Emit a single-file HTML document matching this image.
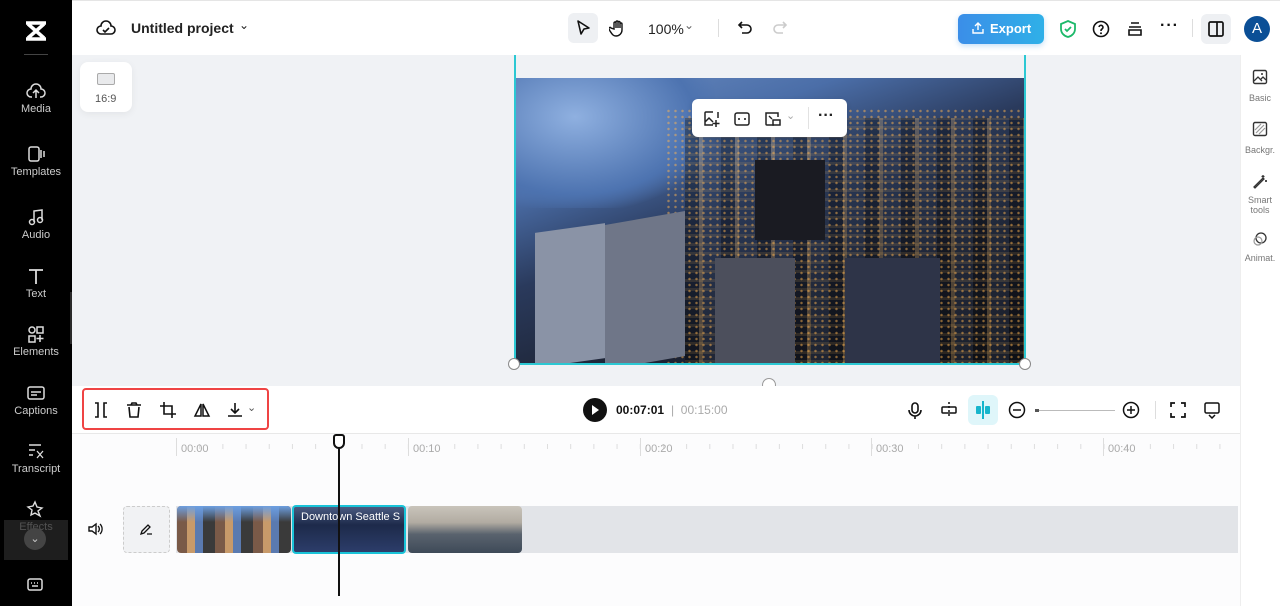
<!DOCTYPE html>
<html><head><style>
*{box-sizing:border-box;margin:0;padding:0}
body{width:1280px;height:606px;overflow:hidden;font-family:"Liberation Sans",sans-serif;background:#fff;position:relative}
.abs{position:absolute}
.side{left:0;top:0;width:72px;height:606px;background:#000;color:#ddd}
.si{position:absolute;left:0;width:72px;text-align:center;font-size:11px;color:#ccc}
.si svg{display:block;margin:0 auto 3px}
.tl{font-size:11px;color:#aaa}
</style></head><body>
<div class="abs side">
 <svg class="abs" style="left:24px;top:20px" width="24" height="22" viewBox="0 0 24 22"><path d="M2 3h20M2 19h20M4 4l16 14M20 4L4 18" stroke="#fff" stroke-width="3.5" fill="none"/></svg>
 <div class="abs" style="left:24px;top:54px;width:24px;height:1px;background:#444"></div>
 <div class="si" style="top:82px"><svg width="20" height="18" viewBox="0 0 20 18"><path d="M6 15H5a4 4 0 0 1 0-8 5 5 0 0 1 10 0 4 4 0 0 1 0 8h-1M10 16V9M7 11l3-3 3 3" stroke="#ddd" stroke-width="1.5" fill="none"/></svg>Media</div>
 <div class="si" style="top:145px"><svg width="20" height="18" viewBox="0 0 20 18"><rect x="3" y="2" width="10" height="14" rx="2" stroke="#ddd" stroke-width="1.5" fill="none"/><path d="M15 5v8M18 6v6" stroke="#ddd" stroke-width="1.5"/></svg>Templates</div>
 <div class="si" style="top:208px"><svg width="20" height="18" viewBox="0 0 20 18"><path d="M8 14V3l8-1v10" stroke="#ddd" stroke-width="1.5" fill="none"/><circle cx="6" cy="14" r="2.5" stroke="#ddd" stroke-width="1.5" fill="none"/><circle cx="14" cy="12" r="2.5" stroke="#ddd" stroke-width="1.5" fill="none"/></svg>Audio</div>
 <div class="si" style="top:267px"><svg width="20" height="18" viewBox="0 0 20 18"><path d="M3 3h14M10 3v14" stroke="#ddd" stroke-width="1.8"/></svg>Text</div>
 <div class="si" style="top:325px"><svg width="20" height="18" viewBox="0 0 20 18"><circle cx="6" cy="5" r="3" stroke="#ddd" stroke-width="1.5" fill="none"/><rect x="11" y="2" width="6" height="6" stroke="#ddd" stroke-width="1.5" fill="none"/><rect x="3" y="11" width="6" height="6" stroke="#ddd" stroke-width="1.5" fill="none"/><path d="M14 10v7M10.5 13.5h7" stroke="#ddd" stroke-width="1.5"/></svg>Elements</div>
 <div class="si" style="top:384px"><svg width="20" height="18" viewBox="0 0 20 18"><rect x="2" y="3" width="16" height="12" rx="2" stroke="#ddd" stroke-width="1.5" fill="none"/><path d="M5 8h10M5 11h6" stroke="#ddd" stroke-width="1.5"/></svg>Captions</div>
 <div class="si" style="top:442px"><svg width="20" height="18" viewBox="0 0 20 18"><path d="M3 3h12M3 8h6M3 13h4" stroke="#ddd" stroke-width="1.5"/><path d="M11 9l6 7M17 9l-6 7" stroke="#ddd" stroke-width="1.3"/></svg>Transcript</div>
 <div class="si" style="top:500px"><svg width="20" height="18" viewBox="0 0 20 18"><path d="M9 2l2 5 5 1-4 3 2 5-5-3-4 2 1-5-4-3 5-1z" stroke="#ddd" stroke-width="1.4" fill="none"/></svg>Effects</div>
 <div class="abs" style="left:4px;top:520px;width:64px;height:40px;background:rgba(40,40,40,.75)"></div>
 <div class="abs" style="left:24px;top:528px;width:22px;height:22px;border-radius:50%;background:#444;color:#ccc;font-size:11px;text-align:center;line-height:22px">⌄</div>
 <svg class="abs" style="left:26px;top:577px" width="18" height="16" viewBox="0 0 18 16"><rect x="2" y="2" width="14" height="11" rx="2" stroke="#ddd" stroke-width="1.5" fill="none"/><path d="M5 6h1M8 6h1M11 6h1M6 9h6" stroke="#ddd" stroke-width="1.5"/></svg>
</div>
<div class="abs" style="left:70px;top:292px;width:10px;height:52px;background:#2a2a2a;border-radius:0 6px 6px 0"></div>

<div class="abs" style="left:72px;top:0;width:1208px;height:55px;background:#fff;border-top:1px solid #e5e5e5">
 <svg class="abs" style="left:24px;top:18px" width="20" height="18" viewBox="0 0 20 18"><path d="M5 15a4 4 0 0 1 0-8 5 5 0 0 1 10 0 4 4 0 0 1 0 8z" stroke="#111" stroke-width="1.6" fill="none"/><path d="M7 11l2 2 4-4" stroke="#111" stroke-width="1.6" fill="none"/></svg>
 <div class="abs" style="left:59px;top:19px;font-size:14px;font-weight:bold;color:#222">Untitled project</div>
 <div class="abs" style="left:167px;top:17px;font-size:12px;color:#222">⌄</div>
 <div class="abs" style="left:496px;top:12px;width:30px;height:30px;border-radius:6px;background:#eef0f3"></div>
 <svg class="abs" style="left:503px;top:18px" width="16" height="18" viewBox="0 0 16 18"><path d="M3 2l11 7-5 1-3 5z" stroke="#111" stroke-width="1.6" fill="none" stroke-linejoin="round"/></svg>
 <svg class="abs" style="left:537px;top:18px" width="18" height="18" viewBox="0 0 18 18"><path d="M5 10V4a1 1 0 0 1 2 0v5V3a1 1 0 0 1 2 0v6V3.5a1 1 0 0 1 2 0V9V5a1 1 0 0 1 2 0v6a6 6 0 0 1-6 6c-3 0-4-2-6-5l-1-2a1 1 0 0 1 2-1z" stroke="#111" stroke-width="1.4" fill="none"/></svg>
 <div class="abs" style="left:576px;top:20px;font-size:14px;color:#222">100%</div>
 <div class="abs" style="left:612px;top:17px;font-size:12px;color:#666">⌄</div>
 <div class="abs" style="left:646px;top:18px;width:1px;height:18px;background:#ddd"></div>
 <svg class="abs" style="left:664px;top:18px" width="18" height="18" viewBox="0 0 18 18"><path d="M6 3L3 6l3 3M3 6h8a4 4 0 0 1 0 8H6" stroke="#111" stroke-width="1.6" fill="none"/></svg>
 <svg class="abs" style="left:699px;top:18px" width="18" height="18" viewBox="0 0 18 18"><path d="M12 3l3 3-3 3M15 6H7a4 4 0 0 0 0 8h5" stroke="#ccc" stroke-width="1.6" fill="none"/></svg>
 <div class="abs" style="left:886px;top:13px;width:86px;height:30px;border-radius:6px;background:linear-gradient(90deg,#3b8ee8,#2fb0e8);color:#fff;font-size:13px;font-weight:bold;line-height:30px;padding-left:32px;box-shadow:0 2px 6px rgba(60,150,230,.3)">Export</div>
 <svg class="abs" style="left:899px;top:20px" width="14" height="14" viewBox="0 0 14 14"><path d="M7 9V2M4 5l3-3 3 3M2 8v4h10V8" stroke="#fff" stroke-width="1.4" fill="none"/></svg>
 <svg class="abs" style="left:987px;top:18px" width="18" height="20" viewBox="0 0 18 20"><path d="M9 2l7 3v5c0 4-3 7-7 8-4-1-7-4-7-8V5z" stroke="#1db96a" stroke-width="1.8" fill="none"/><path d="M6 10l2 2 4-4" stroke="#1db96a" stroke-width="1.8" fill="none"/></svg>
 <svg class="abs" style="left:1020px;top:19px" width="18" height="18" viewBox="0 0 18 18"><circle cx="9" cy="9" r="7.5" stroke="#111" stroke-width="1.6" fill="none"/><path d="M7 7a2 2 0 1 1 3 2c-1 .5-1 1-1 2" stroke="#111" stroke-width="1.6" fill="none"/><circle cx="9" cy="13.3" r="1" fill="#111"/></svg>
 <svg class="abs" style="left:1054px;top:19px" width="18" height="18" viewBox="0 0 18 18"><path d="M5 3h8M3 7h12M3 10h12v5H3z" stroke="#111" stroke-width="1.6" fill="none"/></svg>
 <div class="abs" style="left:1088px;top:16px;font-size:16px;font-weight:bold;color:#111;letter-spacing:1px">···</div>
 <div class="abs" style="left:1120px;top:18px;width:1px;height:18px;background:#ddd"></div>
 <div class="abs" style="left:1129px;top:13px;width:30px;height:30px;border-radius:6px;background:#eef0f3"></div>
 <svg class="abs" style="left:1135px;top:19px" width="18" height="18" viewBox="0 0 18 18"><rect x="2" y="2" width="14" height="14" rx="1.5" stroke="#111" stroke-width="1.7" fill="none"/><path d="M10 2v14" stroke="#111" stroke-width="1.7"/></svg>
 <div class="abs" style="left:1172px;top:15px;width:26px;height:26px;border-radius:50%;background:#0b4f96;color:#fff;font-size:15px;text-align:center;line-height:26px">A</div>
</div>

<div class="abs" style="left:72px;top:55px;width:1168px;height:331px;background:#f0f2f5"></div>
<div class="abs" style="left:80px;top:62px;width:52px;height:50px;background:#fff;border-radius:8px;box-shadow:0 2px 8px rgba(0,0,0,.06)"></div>
<div class="abs" style="left:97px;top:73px;width:18px;height:12px;border:1.5px solid #aaa;border-radius:2px;background:#e9eaec"></div>
<div class="abs" style="left:95px;top:93px;font-size:11px;color:#555">16:9</div>

<div class="abs" style="left:515px;top:78px;width:510px;height:285px;overflow:hidden;background:linear-gradient(160deg,#6d8fc4 0%,#4b6ea8 25%,#2a3a5c 45%,#1d2333 70%,#15171f 100%)">
 <div class="abs" style="left:0;top:0;width:200px;height:130px;background:radial-gradient(ellipse at 30% 30%,#8fb0e0,#4d73b0 60%,transparent 75%)"></div>
 <div class="abs" style="left:170px;top:40px;width:340px;height:245px;background:repeating-linear-gradient(90deg,rgba(0,0,0,.35) 0 14px,rgba(230,170,80,.25) 14px 18px,rgba(40,50,70,.3) 18px 36px)"></div>
 <div class="abs" style="left:170px;top:40px;width:340px;height:245px;background:repeating-linear-gradient(0deg,rgba(255,190,90,.12) 0 3px,transparent 3px 9px)"></div>
 <div class="abs" style="left:150px;top:30px;width:360px;height:255px;background:radial-gradient(circle,rgba(255,180,80,.5) 0 1px,transparent 1.5px);background-size:7px 6px"></div>
 <div class="abs" style="left:20px;top:150px;width:70px;height:135px;background:#8a93a6;transform:skewY(-8deg)"></div>
 <div class="abs" style="left:90px;top:140px;width:80px;height:145px;background:#6f7688;transform:skewY(-10deg)"></div>
 <div class="abs" style="left:240px;top:82px;width:70px;height:80px;background:#1a1b22"></div>
 <div class="abs" style="left:330px;top:180px;width:95px;height:105px;background:#2e3448"></div>
 <div class="abs" style="left:200px;top:180px;width:80px;height:105px;background:#4c4f5c"></div>
</div>
<div class="abs" style="left:514px;top:55px;width:2px;height:309px;background:#2cc8d3"></div>
<div class="abs" style="left:1024px;top:55px;width:2px;height:309px;background:#2cc8d3"></div>
<div class="abs" style="left:514px;top:363px;width:512px;height:2px;background:#2cc8d3"></div>
<div class="abs" style="left:508px;top:358px;width:12px;height:12px;border-radius:50%;background:#fff;border:1px solid #888"></div>
<div class="abs" style="left:1019px;top:358px;width:12px;height:12px;border-radius:50%;background:#fff;border:1px solid #888"></div>
<div class="abs" style="left:762px;top:378px;width:14px;height:14px;border-radius:50%;background:#fff;border:1px solid #999"></div>

<div class="abs" style="left:692px;top:99px;width:155px;height:38px;background:#fff;border-radius:6px;box-shadow:0 2px 6px rgba(0,0,0,.12)">
 <svg class="abs" style="left:11px;top:11px" width="18" height="18" viewBox="0 0 18 18"><path d="M10 2H3a1 1 0 0 0-1 1v12h8M2 12l4-4 4 4M13 10v7M9.5 13.5h7M15 2v6" stroke="#222" stroke-width="1.5" fill="none"/></svg>
 <svg class="abs" style="left:41px;top:11px" width="18" height="18" viewBox="0 0 18 18"><rect x="2" y="3" width="14" height="12" rx="2" stroke="#222" stroke-width="1.5" fill="none"/><path d="M6 8v2M12 8v2" stroke="#222" stroke-width="1.6"/></svg>
 <svg class="abs" style="left:72px;top:11px" width="18" height="18" viewBox="0 0 18 18"><path d="M10 15H3a1 1 0 0 1-1-1V3h12v4" stroke="#222" stroke-width="1.5" fill="none"/><rect x="9" y="10" width="7" height="5" stroke="#222" stroke-width="1.5" fill="none"/><path d="M5 6l3 3" stroke="#222" stroke-width="1.4"/></svg>
 <div class="abs" style="left:94px;top:10px;font-size:11px;color:#aaa">⌄</div>
 <div class="abs" style="left:116px;top:8px;width:1px;height:22px;background:#e2e2e2"></div>
 <div class="abs" style="left:126px;top:8px;font-size:16px;font-weight:bold;color:#222">···</div>
</div>

<div class="abs" style="left:1240px;top:55px;width:40px;height:551px;background:#fff;border-left:1px solid #eee"></div>
<div class="abs" style="left:1240px;top:69px;width:40px;text-align:center;font-size:9px;color:#777">
 <svg width="16" height="16" viewBox="0 0 16 16" style="display:block;margin:0 auto 8px"><rect x="1.5" y="1.5" width="13" height="13" rx="1.5" stroke="#333" stroke-width="1.4" fill="none"/><path d="M2 12l4-4 4 4M9 10l2-2 3 3" stroke="#333" stroke-width="1.3" fill="none"/><circle cx="10" cy="5" r="1" fill="#333"/></svg>Basic
 <svg width="16" height="16" viewBox="0 0 16 16" style="display:block;margin:18px auto 8px"><rect x="1.5" y="1.5" width="13" height="13" rx="1.5" stroke="#333" stroke-width="1.4" fill="none"/><path d="M4 12l8-8M7 13l6-6M3 9l6-6" stroke="#999" stroke-width="1.2"/></svg>Backgr.
 <svg width="16" height="16" viewBox="0 0 16 16" style="display:block;margin:18px auto 6px"><path d="M2 14l9-9 1 1-9 9zM11 2v3M9.5 3.5h3M14 7v2M13 8h2" stroke="#333" stroke-width="1.3" fill="none"/></svg>Smart<br>tools
 <svg width="16" height="16" viewBox="0 0 16 16" style="display:block;margin:16px auto 6px"><circle cx="9" cy="7" r="5" stroke="#333" stroke-width="1.3" fill="none"/><circle cx="6" cy="10" r="4" stroke="#999" stroke-width="1.2" fill="none"/></svg>Animat.
</div>

<div class="abs" style="left:72px;top:386px;width:1168px;height:48px;background:#fff;border-bottom:1px solid #e8e8e8"></div>
<div class="abs" style="left:82px;top:388px;width:187px;height:42px;border:2px solid #ef4444;border-radius:4px"></div>
<svg class="abs" style="left:92px;top:401px" width="18" height="18" viewBox="0 0 18 18"><path d="M3 2h3v14H3M15 2h-3v14h3" stroke="#111" stroke-width="1.6" fill="none"/></svg>
<svg class="abs" style="left:125px;top:401px" width="18" height="18" viewBox="0 0 18 18"><path d="M2 4h14M6 4l1-2h4l1 2M4 6l1 10h8l1-10" stroke="#111" stroke-width="1.6" fill="none"/></svg>
<svg class="abs" style="left:159px;top:401px" width="18" height="18" viewBox="0 0 18 18"><path d="M5 1v12h12M1 5h12v12" stroke="#111" stroke-width="1.6" fill="none"/></svg>
<svg class="abs" style="left:193px;top:401px" width="18" height="18" viewBox="0 0 18 18"><path d="M8 3L2 15h6zM10 3l6 12h-6z" stroke="#111" stroke-width="1.5" fill="none"/></svg>
<svg class="abs" style="left:226px;top:401px" width="18" height="18" viewBox="0 0 18 18"><path d="M9 2v10M5 8l4 4 4-4M2 15h14" stroke="#111" stroke-width="1.6" fill="none"/></svg>
<div class="abs" style="left:247px;top:401px;font-size:11px;color:#555">⌄</div>

<div class="abs" style="left:583px;top:398px;width:24px;height:24px;border-radius:50%;background:#111"></div>
<div class="abs" style="left:592px;top:405px;width:0;height:0;border-left:7px solid #fff;border-top:5px solid transparent;border-bottom:5px solid transparent"></div>
<div class="abs" style="left:616px;top:403px;font-size:12px;font-weight:bold;color:#111">00:07:01</div>
<div class="abs" style="left:671px;top:403px;font-size:12px;color:#aaa">|&nbsp; 00:15:00</div>

<svg class="abs" style="left:906px;top:401px" width="18" height="20" viewBox="0 0 18 20"><rect x="6" y="2" width="6" height="10" rx="3" stroke="#111" stroke-width="1.6" fill="none"/><path d="M3 9a6 6 0 0 0 12 0M9 15v3" stroke="#111" stroke-width="1.6" fill="none"/></svg>
<svg class="abs" style="left:940px;top:401px" width="18" height="18" viewBox="0 0 18 18"><rect x="2" y="6" width="14" height="6" rx="1" stroke="#111" stroke-width="1.5" fill="none"/><path d="M9 1v16" stroke="#111" stroke-width="1.5" stroke-dasharray="2 2"/></svg>
<div class="abs" style="left:968px;top:395px;width:30px;height:30px;border-radius:6px;background:#dff6fa"></div>
<div class="abs" style="left:976px;top:406px;width:5px;height:8px;background:#16b5cc;border-radius:1px"></div>
<div class="abs" style="left:982px;top:401px;width:2px;height:18px;background:#16b5cc"></div>
<div class="abs" style="left:985px;top:406px;width:5px;height:8px;background:#16b5cc;border-radius:1px"></div>
<svg class="abs" style="left:1008px;top:401px" width="18" height="18" viewBox="0 0 18 18"><circle cx="9" cy="9" r="7.5" stroke="#111" stroke-width="1.5" fill="none"/><path d="M5 9h8" stroke="#111" stroke-width="1.5"/></svg>
<div class="abs" style="left:1035px;top:410px;width:80px;height:1px;background:#bbb"></div>
<div class="abs" style="left:1035px;top:409px;width:4px;height:3px;background:#555"></div>
<svg class="abs" style="left:1122px;top:401px" width="18" height="18" viewBox="0 0 18 18"><circle cx="9" cy="9" r="7.5" stroke="#111" stroke-width="1.5" fill="none"/><path d="M5 9h8M9 5v8" stroke="#111" stroke-width="1.5"/></svg>
<div class="abs" style="left:1155px;top:401px;width:1px;height:18px;background:#ddd"></div>
<svg class="abs" style="left:1169px;top:401px" width="18" height="18" viewBox="0 0 18 18"><path d="M2 6V2h4M12 2h4v4M16 12v4h-4M6 16H2v-4" stroke="#111" stroke-width="1.7" fill="none"/></svg>
<svg class="abs" style="left:1203px;top:401px" width="18" height="18" viewBox="0 0 18 18"><rect x="2" y="2" width="14" height="10" rx="1.5" stroke="#111" stroke-width="1.5" fill="none"/><path d="M6 14l3 3 3-3" stroke="#111" stroke-width="1.5" fill="none"/></svg>

<div class="abs" style="left:72px;top:434px;width:1168px;height:172px;background:#fcfcfd"></div>
<div class="abs" style="left:176px;top:438px;width:1064px;height:20px;background:repeating-linear-gradient(90deg,#ddd 0 1px,transparent 1px 23.2px);background-size:23.2px 5px;background-repeat:repeat-x;background-position:0 6px"></div>
<div class="abs tl" style="left:176px;top:438px;height:18px;border-left:1px solid #ddd;padding:5px 0 0 4px">00:00</div>
<div class="abs tl" style="left:408px;top:438px;height:18px;border-left:1px solid #ddd;padding:5px 0 0 4px">00:10</div>
<div class="abs tl" style="left:640px;top:438px;height:18px;border-left:1px solid #ddd;padding:5px 0 0 4px">00:20</div>
<div class="abs tl" style="left:871px;top:438px;height:18px;border-left:1px solid #ddd;padding:5px 0 0 4px">00:30</div>
<div class="abs tl" style="left:1103px;top:438px;height:18px;border-left:1px solid #ddd;padding:5px 0 0 4px">00:40</div>

<svg class="abs" style="left:87px;top:521px" width="16" height="16" viewBox="0 0 16 16"><path d="M2 6h3l4-3v10l-4-3H2z" stroke="#111" stroke-width="1.4" fill="none"/><path d="M11 5a4 4 0 0 1 0 6M13 3a7 7 0 0 1 0 10" stroke="#111" stroke-width="1.3" fill="none"/></svg>
<div class="abs" style="left:123px;top:506px;width:47px;height:47px;border:1px dashed #ccc;border-radius:4px;background:#f1f2f4"></div>
<svg class="abs" style="left:139px;top:522px" width="14" height="14" viewBox="0 0 14 14"><path d="M2 12l1-3 6-6 2 2-6 6zM8 12h5" stroke="#111" stroke-width="1.3" fill="none"/></svg>
<div class="abs" style="left:176px;top:506px;width:1062px;height:47px;background:#e2e4e8"></div>
<div class="abs" style="left:177px;top:506px;width:114px;height:47px;border-radius:4px;background:repeating-linear-gradient(90deg,#7a5a48 0 10px,#c89a6a 10px 18px,#5a7ab0 18px 26px,#3a3a3a 26px 38px)"></div>
<div class="abs" style="left:177px;top:506px;width:114px;height:16px;background:linear-gradient(#6d9fe0,transparent);border-radius:4px 4px 0 0"></div>
<div class="abs" style="left:292px;top:505px;width:114px;height:49px;border:2px solid #19c3d8;border-radius:4px;background:linear-gradient(#4a5a80,#1d2a4a 40%,#2c3d6a);overflow:hidden">
 <div style="font-size:11px;color:#fff;padding:4px 0 0 7px;white-space:nowrap">Downtown Seattle S</div>
</div>
<div class="abs" style="left:408px;top:506px;width:114px;height:47px;border-radius:4px;background:linear-gradient(#c9c4bb 0%,#b2aca2 35%,#5a636e 60%,#3e4a58 100%)"></div>
<div class="abs" style="left:338px;top:434px;width:2px;height:162px;background:#111"></div>
<div class="abs" style="left:333px;top:434px;width:12px;height:15px;border:2px solid #111;border-radius:3px 3px 6px 6px;background:#fff"></div>
</body></html>
